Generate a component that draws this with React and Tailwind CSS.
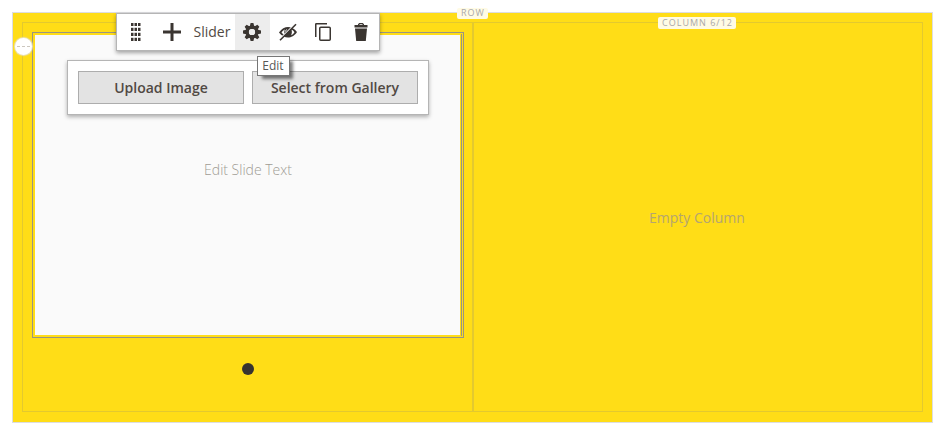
function DragIcon() {
  return (
    <svg width="10" height="18" viewBox="0 0 10 18" fill="#3a3531">
      {[0, 5, 10, 15].map((y) =>
        [0, 3.5, 7].map((x) => <rect key={`${x}-${y}`} x={x} y={y - 0.2} width="2.5" height="3.200" />)
      )}
    </svg>
  );
}

function PlusIcon() {
  return (
    <svg width="18" height="18" viewBox="0 0 18 18" fill="#3a3531">
      <path d="M7.500 0h3v7.500H18v3h-7.500V18h-3v-7.500H0v-3h7.500z" />
    </svg>
  );
}

function GearIcon() {
  return (
    <svg width="18" height="18" viewBox="0 0 18 18">
      <g fill="#3a3531">
        {[0, 45, 90, 135].map((a) => (
          <path key={a} d="M7.600 0h2.800l1 4h-4.800zM7.600 18h2.800l1-4h-4.800z" transform={`rotate(${a} 9 9)`} />
        ))}
      </g>
      <circle cx="9" cy="9" r="4.800" fill="none" stroke="#3a3531" strokeWidth="3.400" />
      <circle cx="9" cy="9" r="3.100" fill="#ededed" />
    </svg>
  );
}

function HideIcon() {
  return (
    <svg width="18" height="18" viewBox="0 0 18 18">
      <path d="M0 9.500C2.500 5.500 6 4 9 4s6.500 1.500 9 5C15.500 13 12 14.500 9 14.500S2.500 13 0 9.500z" fill="#3a3531" />
      <path d="M2.500 9.500c1-1.500 2-2.500 3.300-3-.8 2-.6 4 .4 5.800-1.500-.6-2.700-1.500-3.700-2.800zM15.500 9.200c-1 1.500-2 2.500-3.500 3.100 1-1.800 1.200-3.900.4-5.800 1.300.6 2.200 1.500 3.100 2.700z" fill="#fff" />
      <path d="M8 6.500c-1 .5-1.400 1.200-1.500 2" fill="none" stroke="#fff" />
      <path d="M-.5 16.500L15.500.5l1.500.5L1 17z" fill="#fff" />
      <path d="M1 17.200L17 1.200" stroke="#3a3531" strokeWidth="1.600" />
    </svg>
  );
}

function CopyIcon() {
  return (
    <svg width="16" height="18" viewBox="0 0 16 18" fill="none" stroke="#3a3531">
      <path d="M.75 14V1.250Q.75.75 1.250.75H12" strokeWidth="1.500" />
      <rect x="4.750" y="4.250" width="10.500" height="13" rx="1" strokeWidth="1.500" />
    </svg>
  );
}

function TrashIcon() {
  return (
    <svg width="14" height="18" viewBox="0 0 14 18" fill="#3a3531">
      <path d="M4 2V1.200L5.200 0h3.600L10 1.200V2h3.500v2.500H.5V2zm1.500 0h3V1.200h-3zM1 5.500h12L11.800 18H2.200z" />
    </svg>
  );
}

const label =
  "absolute z-10 flex justify-center rounded-[2px] bg-[#fffbe5] text-[9px] tracking-[1px] text-[#aaa9a8]";

export default function App() {
  return (
    <div className="h-[434px] w-[944px] overflow-hidden bg-white pt-3 pl-3 font-['Open_Sans',sans-serif]">
      <div className="relative h-[411px] w-[921px] border border-[#dddde0] bg-[#ffdd17] p-[9px]">
        <span className={`${label} top-[-5px] left-[444px] h-[11px] w-[31px] pl-px leading-[9px]`}>ROW</span>

        <div className="flex h-[390px]">
          <section className="relative w-[451px] border border-[#e3c92f] p-[9px]">
            <span className="absolute top-[15px] left-[-8px] flex size-[17px] items-center justify-center gap-[2px] rounded-full bg-white shadow-[0_0_1px_1px_#e8e1c0]">
              <i className="h-px w-[3px] bg-[#ccc7bf]" />
              <i className="h-px w-[3px] bg-[#ccc7bf]" />
              <i className="h-px w-[3px] bg-[#ccc7bf]" />
            </span>

            <div className="h-[306px] w-[432px] border border-[#999583] pt-px pl-[2px]">
              <div className="h-[302px] w-[427px] border-r border-[#999583] pt-px">
                <div className="flex h-[300px] w-[425px] flex-col items-center bg-[#fafafa] pt-[25px] pl-px">
                  <div className="flex h-[55px] w-[362px] gap-2 border border-[#b5b5b5] bg-white p-[10px] shadow-[0_2px_4px_rgba(0,0,0,0.3)]">
                    <button className="h-[33px] w-[166px] border border-[#adadad] bg-[#e3e3e3] text-[14px] leading-[31px] font-semibold text-[#514943]">
                      Upload Image
                    </button>
                    <button className="h-[33px] w-[166px] border border-[#adadad] bg-[#e3e3e3] text-[14px] leading-[31px] font-semibold text-[#514943]">
                      Select from Gallery
                    </button>
                  </div>
                  <p className="mt-[44px] text-[14px] leading-[22px] font-light text-[#a09c94]">Edit Slide Text</p>
                </div>
              </div>
            </div>
            <div className="flex justify-center pt-[25px] pl-px">
              <span className="size-3 rounded-full bg-[#373330]" />
            </div>
          </section>

          <section className="relative flex w-[450px] items-center justify-center border border-[#e3c92f]">
            <span className={`${label} top-[-6px] left-[184px] h-[12px] w-[78px] pl-px leading-[11px]`}>COLUMN 6/12</span>
            <p className="pt-[2px] pr-[2px] text-[14px] leading-[22px] text-[#b5a570]">Empty Column</p>
          </section>
        </div>

        <div className="absolute top-0 left-[103px] z-20 flex h-[38px] w-[264px] items-center border border-[#b5b5b5] bg-white pl-px shadow-[0_2px_4px_rgba(0,0,0,0.35)]">
          <span className="flex w-[36px] justify-center"><DragIcon /></span>
          <span className="flex w-[36px] justify-center"><PlusIcon /></span>
          <span className="w-[45px] pr-px text-center text-[14px] leading-[36px] text-[#514943]">Slider</span>
          <span className="flex h-full w-[35px] items-center justify-center bg-[#ededed] pr-px"><GearIcon /></span>
          <span className="flex w-[36px] justify-center"><HideIcon /></span>
          <span className="flex w-[36px] justify-center pr-[2px]"><CopyIcon /></span>
          <span className="flex w-[37px] justify-center"><TrashIcon /></span>
        </div>

        <div className="absolute top-[43px] left-[244px] z-30 flex h-[20px] w-[33px] items-center justify-center border border-[#767676] bg-white pr-px text-[12px] leading-none text-[#575757] shadow-[4px_4px_3px_-1px_rgba(0,0,0,0.5)]">
          Edit
        </div>
      </div>
    </div>
  );
}
